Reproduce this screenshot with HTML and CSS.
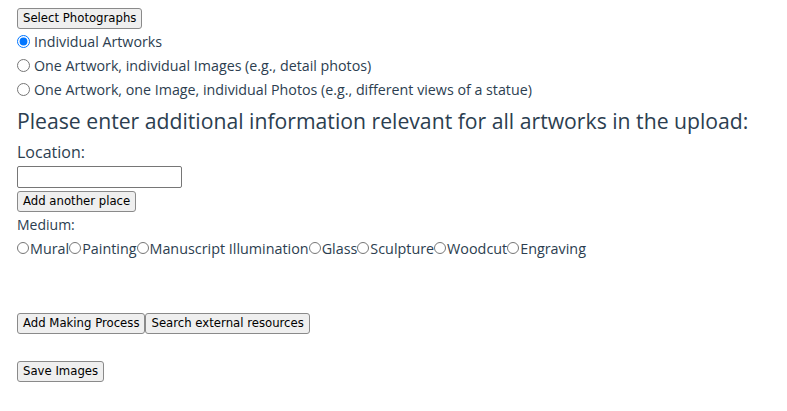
FILE: index.html
```html
<!DOCTYPE html>
<html>
<head>
<meta charset="utf-8">
<link rel="stylesheet" href="styles.css">
</head>
<body>
<div class="app">
  <div class="line-btn"><button class="btn">Select Photographs</button></div>
  <div class="opt"><input class="radio" type="radio" name="mode" checked><span>Individual Artworks</span></div>
  <div class="opt"><input class="radio" type="radio" name="mode"><span>One Artwork, individual Images (e.g., detail photos)</span></div>
  <div class="opt"><input class="radio" type="radio" name="mode"><span>One Artwork, one Image, individual Photos (e.g., different views of a statue)</span></div>
  <h2 class="title">Please enter additional information relevant for all artworks in the upload:</h2>
  <div class="label">Location:</div>
  <div class="line-btn"><input class="text" type="text"></div>
  <div class="line-btn"><button class="btn">Add another place</button></div>
  <div class="label-sm">Medium:</div>
  <div class="media">
    <input class="radio sm" type="radio" name="medium"><span>Mural</span><input class="radio sm" type="radio" name="medium"><span>Painting</span><input class="radio sm" type="radio" name="medium"><span>Manuscript Illumination</span><input class="radio sm" type="radio" name="medium"><span>Glass</span><input class="radio sm" type="radio" name="medium"><span>Sculpture</span><input class="radio sm" type="radio" name="medium"><span>Woodcut</span><input class="radio sm" type="radio" name="medium"><span>Engraving</span>
  </div>
  <div class="actions"><button class="btn">Add Making Process</button><button class="btn">Search external resources</button></div>
  <div class="save"><button class="btn">Save Images</button></div>
</div>
</body>
</html>
```
FILE: styles.css
```css
html, body { margin: 0; padding: 0; background: #fff; }
body { padding: 8px 0 0 17px; }
.app {
  font-family: "Open Sans", "Noto Sans", sans-serif;
  color: #2c3e50;
  font-size: 14.25px;
}
.line-btn { display: flex; }
.btn {
  font-family: "DejaVu Sans", sans-serif;
  font-size: 11.7px;
  color: #000;
  background: #efefef;
  border: 1px solid #8a8a8a;
  border-radius: 3px;
  padding: 0 5px;
  height: 21px;
  line-height: 19px;
  margin: 0;
}
.opt {
  display: flex;
  align-items: center;
  height: 24px;
}
.opt span { margin-left: 4px; }
.radio {
  width: 13px;
  height: 13px;
  margin: 0;
  accent-color: #0075ff;
}
.title {
  font-weight: normal;
  font-size: 21.2px;
  line-height: 30px;
  margin: 5px 0 5px;
}
.label {
  font-size: 16px;
  line-height: 22px;
  margin-bottom: 3px;
}
.text {
  box-sizing: border-box;
  width: 165px;
  height: 22px;
  border: 1px solid #767676;
  border-radius: 2px;
  margin: 0 0 3px;
  padding: 1px 2px;
}
.label-sm {
  font-size: 14px;
  line-height: 24px;
  margin-top: 1px;
}
.media {
  display: flex;
  align-items: center;
  height: 22px;
  font-size: 14.35px;
}
.media .radio { width: 12px; height: 12px; margin-right: 1px; }
.actions { display: flex; margin-top: 54px; }
.save { display: flex; margin-top: 27px; }
```
